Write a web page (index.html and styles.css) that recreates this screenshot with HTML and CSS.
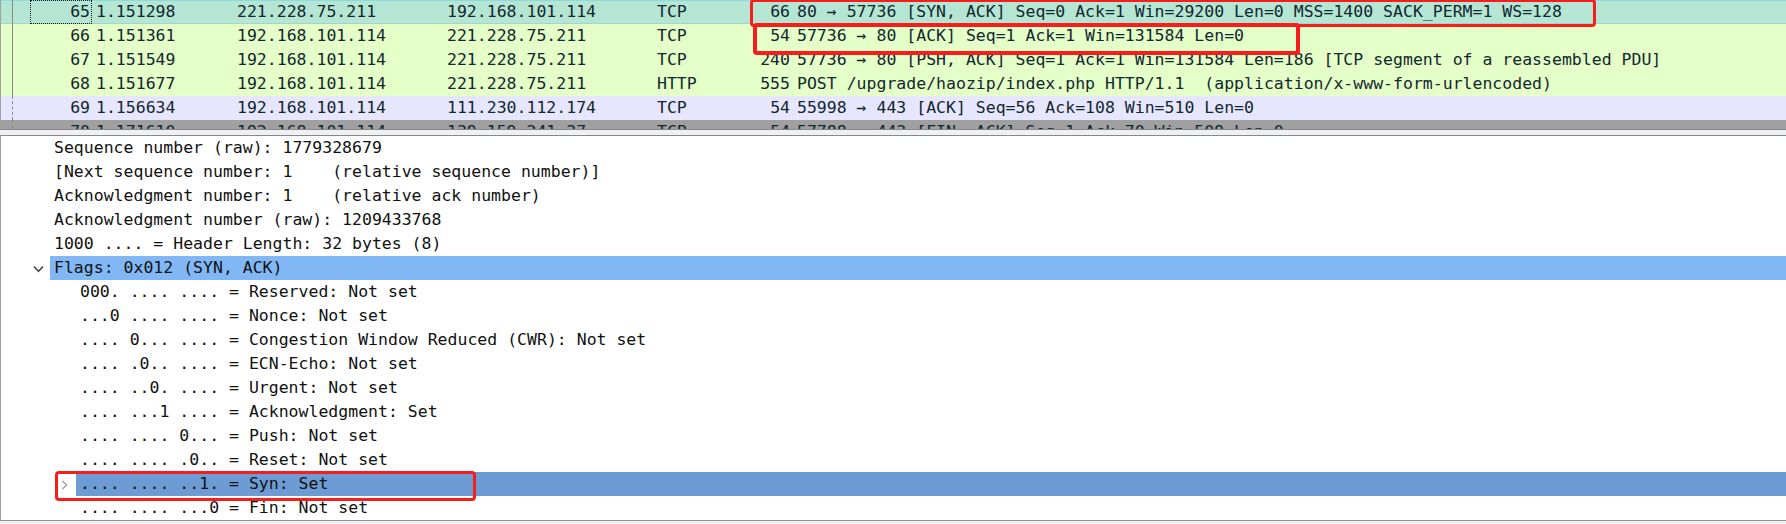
FILE: index.html
```html
<!DOCTYPE html>
<html>
<head>
<meta charset="utf-8">
<title>Wireshark</title>
<link rel="stylesheet" href="styles.css">
</head>
<body>
<div class="screen">
  <div class="plist">
    <div class="prow sel">
      <div class="c-rel"><span class="rel-line"></span></div>
      <div class="c-no">65</div>
      <div class="c-time">1.151298</div>
      <div class="c-src">221.228.75.211</div>
      <div class="c-dst">192.168.101.114</div>
      <div class="c-proto">TCP</div>
      <div class="c-len">66</div>
      <div class="c-info">80 → 57736 [SYN, ACK] Seq=0 Ack=1 Win=29200 Len=0 MSS=1400 SACK_PERM=1 WS=128</div>
    </div>
    <div class="prow http">
      <div class="c-rel"><span class="rel-line"></span></div>
      <div class="c-no">66</div>
      <div class="c-time">1.151361</div>
      <div class="c-src">192.168.101.114</div>
      <div class="c-dst">221.228.75.211</div>
      <div class="c-proto">TCP</div>
      <div class="c-len">54</div>
      <div class="c-info">57736 → 80 [ACK] Seq=1 Ack=1 Win=131584 Len=0</div>
    </div>
    <div class="prow http">
      <div class="c-rel"><span class="rel-line"></span></div>
      <div class="c-no">67</div>
      <div class="c-time">1.151549</div>
      <div class="c-src">192.168.101.114</div>
      <div class="c-dst">221.228.75.211</div>
      <div class="c-proto">TCP</div>
      <div class="c-len">240</div>
      <div class="c-info">57736 → 80 [PSH, ACK] Seq=1 Ack=1 Win=131584 Len=186 [TCP segment of a reassembled PDU]</div>
    </div>
    <div class="prow http">
      <div class="c-rel"><span class="rel-line"></span></div>
      <div class="c-no">68</div>
      <div class="c-time">1.151677</div>
      <div class="c-src">192.168.101.114</div>
      <div class="c-dst">221.228.75.211</div>
      <div class="c-proto">HTTP</div>
      <div class="c-len">555</div>
      <div class="c-info">POST /upgrade/haozip/index.php HTTP/1.1  (application/x-www-form-urlencoded)</div>
    </div>
    <div class="prow tcp">
      <div class="c-rel"><span class="rel-line dashed"></span></div>
      <div class="c-no">69</div>
      <div class="c-time">1.156634</div>
      <div class="c-src">192.168.101.114</div>
      <div class="c-dst">111.230.112.174</div>
      <div class="c-proto">TCP</div>
      <div class="c-len">54</div>
      <div class="c-info">55998 → 443 [ACK] Seq=56 Ack=108 Win=510 Len=0</div>
    </div>
    <div class="prow fin">
      <div class="c-rel"><span class="rel-line dashed"></span></div>
      <div class="c-no">70</div>
      <div class="c-time">1.171610</div>
      <div class="c-src">192.168.101.114</div>
      <div class="c-dst">139.159.241.37</div>
      <div class="c-proto">TCP</div>
      <div class="c-len">54</div>
      <div class="c-info">57788 → 443 [FIN, ACK] Seq=1 Ack=70 Win=509 Len=0</div>
    </div>
  </div>
  <div class="split"></div>
  <div class="details">
    <div class="drow l2"><span class="tw"></span><span class="lbl">Sequence number (raw): 1779328679</span></div>
    <div class="drow l2"><span class="tw"></span><span class="lbl">[Next sequence number: 1    (relative sequence number)]</span></div>
    <div class="drow l2"><span class="tw"></span><span class="lbl">Acknowledgment number: 1    (relative ack number)</span></div>
    <div class="drow l2"><span class="tw"></span><span class="lbl">Acknowledgment number (raw): 1209433768</span></div>
    <div class="drow l2"><span class="tw"></span><span class="lbl">1000 .... = Header Length: 32 bytes (8)</span></div>
    <div class="drow l2"><span class="tw"><svg class="chev-down" width="11" height="8" viewBox="0 0 11 8"><polyline points="1,1.5 5.5,6.3 10,1.5" fill="none" stroke="#4a4a4a" stroke-width="1.6"/></svg></span><span class="lbl hl">Flags: 0x012 (SYN, ACK)</span></div>
    <div class="drow l3"><span class="tw"></span><span class="lbl">000. .... .... = Reserved: Not set</span></div>
    <div class="drow l3"><span class="tw"></span><span class="lbl">...0 .... .... = Nonce: Not set</span></div>
    <div class="drow l3"><span class="tw"></span><span class="lbl">.... 0... .... = Congestion Window Reduced (CWR): Not set</span></div>
    <div class="drow l3"><span class="tw"></span><span class="lbl">.... .0.. .... = ECN-Echo: Not set</span></div>
    <div class="drow l3"><span class="tw"></span><span class="lbl">.... ..0. .... = Urgent: Not set</span></div>
    <div class="drow l3"><span class="tw"></span><span class="lbl">.... ...1 .... = Acknowledgment: Set</span></div>
    <div class="drow l3"><span class="tw"></span><span class="lbl">.... .... 0... = Push: Not set</span></div>
    <div class="drow l3"><span class="tw"></span><span class="lbl">.... .... .0.. = Reset: Not set</span></div>
    <div class="drow l3"><span class="tw"><svg class="chev-right" width="7" height="10" viewBox="0 0 7 10"><polyline points="1.5,1 5.5,5 1.5,9" fill="none" stroke="#a6a6a6" stroke-width="1.6"/></svg></span><span class="lbl hl2">.... .... ..1. = Syn: Set</span></div>
    <div class="drow l3"><span class="tw"></span><span class="lbl">.... .... ...0 = Fin: Not set</span></div>
  </div>

  <div class="mark mark-1"></div>
  <div class="mark mark-2"></div>
  <div class="mark mark-3"></div>
</div>
</body>
</html>
```

FILE: styles.css
```css
html, body {
  margin: 0;
  padding: 0;
}

body {
  background: #f0f0f0;
  font-family: "DejaVu Sans Mono", "Liberation Mono", monospace;
  font-size: 16.5px;
}

.screen {
  position: relative;
  width: 1786px;
  height: 524px;
  overflow: hidden;
}

/* ---------- packet list ---------- */
.plist {
  height: 129px;
  overflow: hidden;
  border-left: 1px solid #a0a0a0;
  border-bottom: 1px solid #828790;
  background: #ffffff;
}

.prow {
  display: flex;
  height: 24px;
  line-height: 24px;
  color: #12272e;
  white-space: pre;
}

.prow.sel {
  background: #b5e6d4;
  box-shadow: inset 0 1px 0 #8ed8e0, inset 0 -1px 0 #9fd7cb;
}

.prow.http { background: #e4ffc7; }
.prow.tcp { background: #e7e6ff; }
.prow.fin { background: #a0a0a0; }

.c-rel {
  width: 29px;
  flex: none;
  display: flex;
}

.rel-line {
  margin-left: 11px;
  border-left: 1px solid #8a8a8a;
}

.rel-line.dashed {
  border-left-style: dashed;
}

.c-no {
  width: 62px;
  flex: none;
  box-sizing: border-box;
  padding-right: 2px;
  text-align: right;
}

.prow.sel .c-no {
  outline: 1px dotted #1a1a1a;
  outline-offset: -1px;
}

.c-time, .c-src, .c-dst, .c-proto {
  flex: none;
  box-sizing: border-box;
  padding-left: 4px;
}

.c-time { width: 141px; }
.c-src { width: 210px; }
.c-dst { width: 210px; }
.c-proto { width: 80px; }

.c-len {
  width: 60px;
  flex: none;
  box-sizing: border-box;
  padding-right: 3px;
  text-align: right;
}

.c-info {
  flex: 1;
  padding-left: 4px;
}

/* ---------- splitter ---------- */
.split {
  height: 5px;
  background: #f0f0f0;
}

/* ---------- packet details ---------- */
.details {
  background: #ffffff;
  border-top: 1px solid #828790;
  border-left: 1px solid #a0a0a0;
  border-bottom: 1px solid #8e929c;
  color: #111111;
}

.drow {
  display: flex;
  height: 24px;
}

.drow.l2 { padding-left: 27px; }
.drow.l3 { padding-left: 53px; }

.tw {
  width: 20px;
  flex: none;
  display: flex;
  align-items: center;
  justify-content: center;
}

.tw svg {
  display: block;
  margin-top: 2px;
}

.lbl {
  flex: 1;
  margin-left: 2px;
  padding-left: 4px;
  line-height: 24px;
  white-space: pre;
}

.lbl.hl { background: #82b7f5; }
.lbl.hl2 { background: #6c9cd3; }

/* ---------- red annotation boxes ---------- */
.mark {
  position: absolute;
  box-sizing: border-box;
  border: 3px solid #f81d1d;
  border-radius: 4px;
}

.mark-1 {
  left: 750px;
  top: -1px;
  width: 846px;
  height: 28px;
}

.mark-2 {
  left: 753px;
  top: 23px;
  width: 547px;
  height: 32px;
  border-width: 4px;
}

.mark-3 {
  left: 55px;
  top: 471px;
  width: 421px;
  height: 30px;
}
```
